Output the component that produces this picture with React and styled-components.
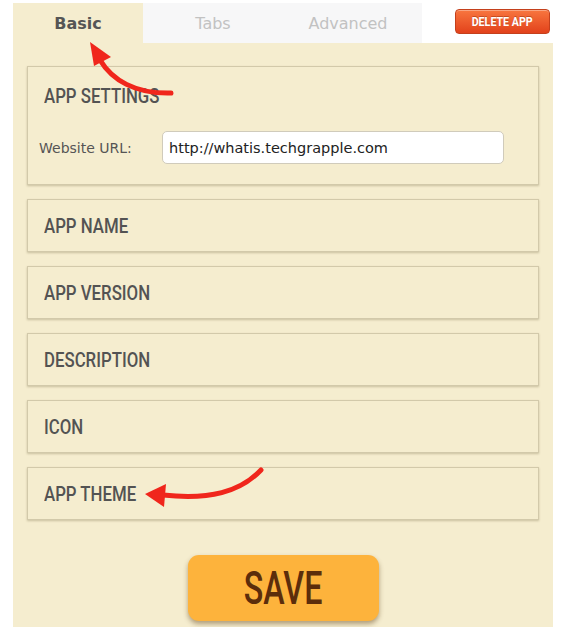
import styled, { createGlobalStyle } from "styled-components";

const GlobalStyle = createGlobalStyle`
  body {
    margin: 0;
    background: #ffffff;
    font-family: "DejaVu Sans", Verdana, sans-serif;
  }
`;

const Page = styled.div`
  position: relative;
  width: 563px;
  height: 627px;
  overflow: hidden;
  padding: 3px 0 0 13px;
  box-sizing: border-box;
`;

const TopRow = styled.div`
  display: flex;
  align-items: flex-start;
  width: 540px;
  height: 40px;
`;

const TabBar = styled.div`
  display: flex;
  background: #f7f7f8;
  width: 409px;
  height: 40px;
`;

const Tab = styled.div`
  width: ${(p) => p.width}px;
  height: 40px;
  display: flex;
  align-items: center;
  justify-content: center;
  font-size: 16px;
  font-weight: ${(p) => (p.active ? "bold" : "normal")};
  color: ${(p) => (p.active ? "#555555" : "#c2c2c2")};
  background: ${(p) => (p.active ? "#f5edcf" : "transparent")};
`;

// condensed display face: Roboto squeezed horizontally
const Squeeze = styled.span`
  display: inline-block;
  transform: scaleX(${(p) => p.x || 0.85});
  transform-origin: ${(p) => (p.center ? "center" : "left")} center;
  white-space: nowrap;
`;

const DeleteButton = styled.button`
  margin: 6px 3px 0 auto;
  width: 95px;
  height: 25px;
  border: 1px solid #c4401c;
  border-radius: 4px;
  background: linear-gradient(#f8763f, #e2421b);
  color: #fff;
  font-family: Roboto, sans-serif;
  font-weight: 700;
  font-size: 13px;
  padding: 0;
  text-shadow: 0 -1px 0 rgba(120, 30, 0, 0.4);
  box-shadow: inset 0 1px 0 rgba(255, 255, 255, 0.35);
`;

const Panel = styled.div`
  width: 540px;
  height: 584px;
  background: #f5edcf;
  padding: 23px 14px 0;
  box-sizing: border-box;
  display: flex;
  flex-direction: column;
  gap: 14px;
`;

const Section = styled.div`
  border: 1px solid #d2c9aa;
  box-shadow: 0 1px 2px rgba(120, 105, 70, 0.35);
  background: #f5edcf;
  height: ${(p) => p.height || 53}px;
  box-sizing: border-box;
  padding: 0 16px;
  display: flex;
  flex-direction: column;
  justify-content: ${(p) => (p.height ? "flex-start" : "center")};
`;

const Heading = styled.div`
  font-family: Roboto, "DejaVu Sans", sans-serif;
  font-weight: 500;
  font-size: 21px;
  line-height: 24px;
  color: #535353;
  margin-top: ${(p) => p.top || 0}px;
`;

const Field = styled.div`
  display: flex;
  align-items: center;
  margin: 23px 0 0 -5px;
`;

const Label = styled.label`
  font-size: 14px;
  color: #555555;
  width: 123px;
`;

const Input = styled.input`
  width: 342px;
  height: 33px;
  box-sizing: border-box;
  border: 1px solid #d0cbbb;
  border-radius: 5px;
  background: #ffffff;
  padding: 0 6px;
  font-family: "DejaVu Sans", Verdana, sans-serif;
  font-size: 14.5px;
  color: #222;
  outline: none;
`;

const SaveRow = styled.div`
  display: flex;
  justify-content: center;
  margin-top: 21px;
`;

const SaveButton = styled.button`
  width: 191px;
  height: 66px;
  border: none;
  border-radius: 11px;
  background: #fdb33c;
  box-shadow: 0 3px 5px rgba(90, 60, 20, 0.45);
  color: #5c2d0b;
  font-family: Roboto, "DejaVu Sans", sans-serif;
  font-weight: 500;
  font-size: 46px;
  padding: 0;
`;

const Arrows = styled.svg`
  position: absolute;
  left: 0;
  top: 0;
  pointer-events: none;
`;

function Arrow({ d, head }) {
  return (
    <g>
      <path d={d} fill="none" stroke="#f0261c" strokeWidth="5" strokeLinecap="round" />
      <polygon points={head} fill="#f0261c" />
    </g>
  );
}

const sections = ["APP NAME", "APP VERSION", "DESCRIPTION", "ICON", "APP THEME"];

export default function App() {
  return (
    <>
      <GlobalStyle />
      <Page>
        <TopRow>
          <TabBar>
            <Tab width={130} active>
              Basic
            </Tab>
            <Tab width={140}>Tabs</Tab>
            <Tab width={130}>Advanced</Tab>
          </TabBar>
          <DeleteButton>
            <Squeeze x={0.82} center>
              DELETE APP
            </Squeeze>
          </DeleteButton>
        </TopRow>
        <Panel>
          <Section height={119}>
            <Heading top={17}>
              <Squeeze x={0.8}>APP SETTINGS</Squeeze>
            </Heading>
            <Field>
              <Label>Website URL:</Label>
              <Input defaultValue="http://whatis.techgrapple.com" />
            </Field>
          </Section>
          {sections.map((s) => (
            <Section key={s}>
              <Heading>
                <Squeeze x={0.8}>{s}</Squeeze>
              </Heading>
            </Section>
          ))}
          <SaveRow>
            <SaveButton>
              <Squeeze x={0.7} center>
                SAVE
              </Squeeze>
            </SaveButton>
          </SaveRow>
        </Panel>
        <Arrows width="563" height="627">
          <Arrow d="M171 93 C 135 94, 112 80, 100 60" head="90,42 111,57 94,66" />
          <Arrow d="M261 470 C 240 492, 210 500, 163 495" head="145,494 166,484 164,507" />
        </Arrows>
      </Page>
    </>
  );
}
